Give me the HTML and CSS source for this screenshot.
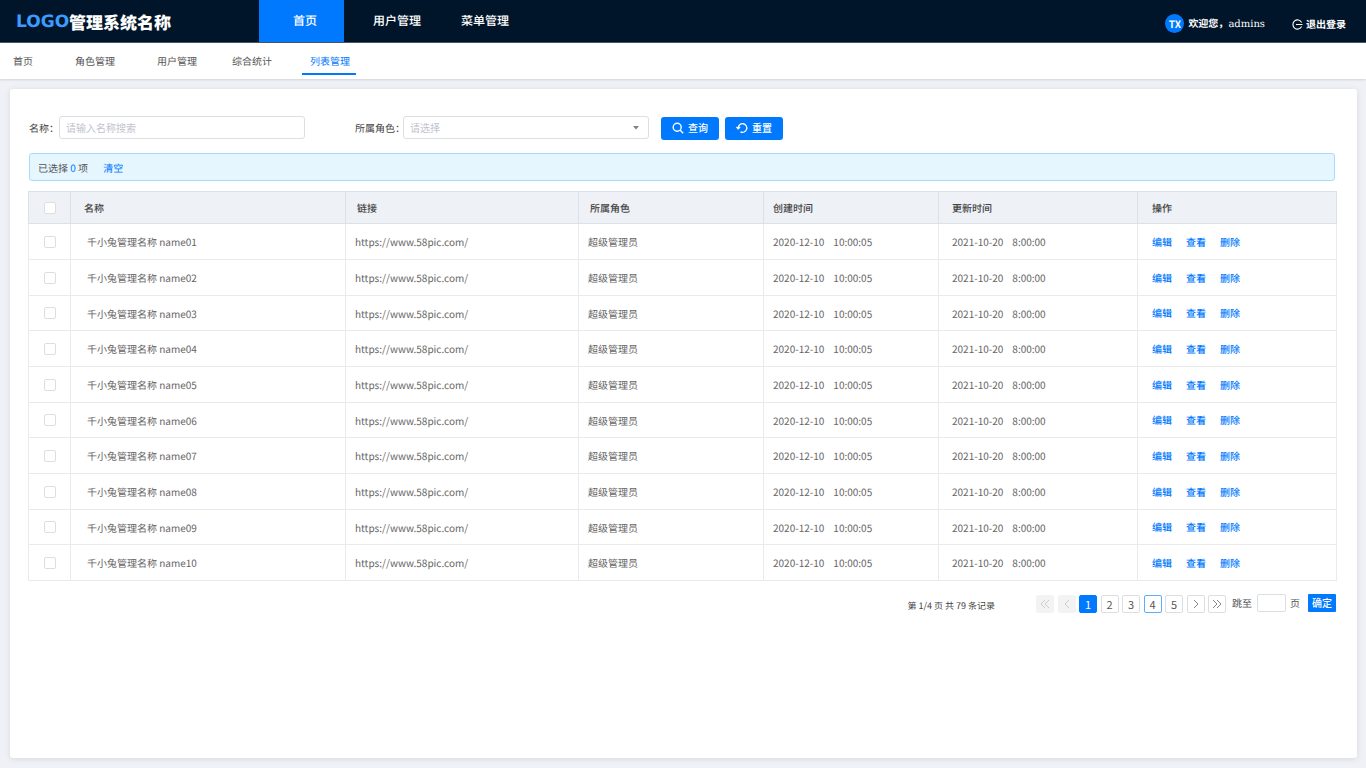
FILE: index.html
```html
<!DOCTYPE html>
<html lang="zh-CN">
<head>
    <meta charset="UTF-8">
    <meta name="viewport" content="width=device-width, initial-scale=1.0">
    <title>管理系统</title>
    <link rel="stylesheet" href="styles.css">
</head>
<body>

<header class="header">
    <a class="logo" href="#"><span>LOGO</span><b>管理系统名称</b></a>
    <nav class="main-nav">
        <a class="active" href="#">首页</a>
        <a href="#">用户管理</a>
        <a href="#">菜单管理</a>
    </nav>
    <div class="user">
        <span class="avatar">TX</span>
        <span class="welcome">欢迎您，<span>admins</span></span>
        <a class="logout" href="#">
            <svg width="11" height="11" viewBox="0 0 11 11" fill="none" stroke="#fff" stroke-width="1.1">
                <path d="M9.6 3.4A4.6 4.6 0 1 0 9.6 7.6M4 5.5h6.5"/>
            </svg>退出登录</a>
    </div>
</header>

<nav class="sub-nav">
    <a href="#">首页</a>
    <a href="#">角色管理</a>
    <a href="#">用户管理</a>
    <a href="#">综合统计</a>
    <a class="active" href="#">列表管理</a>
</nav>

<main class="panel">
    <form class="search" id="search-form">
        <label class="name-label" for="name">名称：</label>
        <input type="text" id="name" placeholder="请输入名称搜索">
        <label class="role-label" for="role">所属角色：</label>
        <select id="role">
            <option value="">请选择</option>
            <option value="1">超级管理员</option>
        </select>
        <button type="submit" class="btn">
            <svg width="12" height="12" viewBox="0 0 12 12" fill="none" stroke="#fff" stroke-width="1.4">
                <circle cx="5.2" cy="5.2" r="4"/><path d="M8 8l3.2 3.2"/>
            </svg>查询</button>
        <button type="reset" class="btn">
            <svg width="12" height="12" viewBox="0 0 12 12" fill="none" stroke="#fff" stroke-width="1.3">
                <path d="M2.2 6.6V6a4.3 4.3 0 1 1 2.3 3.8M.5 5l1.7 1.8L4.1 5"/>
            </svg>重置</button>
    </form>

    <div class="selected">已选择 <em>0</em> 项 <a href="#">清空</a></div>

    <table class="list">
        <colgroup>
            <col class="c-check"><col class="c-name"><col class="c-link"><col class="c-role">
            <col class="c-created"><col class="c-updated"><col class="c-action">
        </colgroup>
        <thead>
            <tr>
                <th><input type="checkbox" aria-label="全选"></th>
                <th>名称</th>
                <th>链接</th>
                <th>所属角色</th>
                <th>创建时间</th>
                <th>更新时间</th>
                <th>操作</th>
            </tr>
        </thead>
        <tbody id="list-body"></tbody>
    </table>

    <div class="footer">
        <span class="total">第 1/4 页 共 79 条记录</span>
        <div class="pages">
            <button disabled aria-label="首页"><svg width="10" height="10" viewBox="0 0 10 10"><path d="M5 1L1 5l4 4M9 1L5 5l4 4"/></svg></button>
            <button disabled aria-label="上一页"><svg width="10" height="10" viewBox="0 0 10 10"><path d="M7 1L3 5l4 4"/></svg></button>
            <button class="current">1</button>
            <button>2</button>
            <button>3</button>
            <button class="hover">4</button>
            <button>5</button>
            <button aria-label="下一页"><svg width="10" height="10" viewBox="0 0 10 10"><path d="M3 1l4 4-4 4"/></svg></button>
            <button aria-label="末页"><svg width="10" height="10" viewBox="0 0 10 10"><path d="M1 1l4 4-4 4M5 1l4 4-4 4"/></svg></button>
        </div>
        <form class="jump">
            <label for="page">跳至</label>
            <input type="text" id="page">
            <span>页</span>
            <button type="submit">确定</button>
        </form>
    </div>
</main>

<script>
// 渲染列表
function renderList() {
    const body = document.getElementById('list-body');
    let html = '';
    for (let i = 1; i <= 10; i++) {
        const no = String(i).padStart(2, '0');
        html += `<tr>
            <td><input type="checkbox" aria-label="选择 name${no}"></td>
            <td>千小兔管理名称 name${no}</td>
            <td>https://www.58pic.com/</td>
            <td>超级管理员</td>
            <td><span class="date">2020-12-10</span>10:00:05</td>
            <td><span class="date">2021-10-20</span>8:00:00</td>
            <td><a href="#">编辑</a><a href="#">查看</a><a href="#">删除</a></td>
        </tr>`;
    }
    body.innerHTML = html;
}

renderList();
</script>

</body>
</html>
```

FILE: styles.css
```css
* {
    box-sizing: border-box;
}

body {
    margin: 0;
    min-height: 100vh;
    display: flex;
    flex-direction: column;
    background: #eff1f6;
    color: #555;
    font-family: "Noto Sans CJK SC", sans-serif;
    font-size: 10px;
    line-height: 16px;
    text-rendering: geometricPrecision;
}

a {
    color: #0079fe;
    text-decoration: none;
}

input, select, button {
    font: inherit;
    margin: 0;
}

/* 顶部 */
.header {
    display: flex;
    height: 43px;
    background: #001529;
    border-bottom: 1px solid #4a5568;
}

.logo {
    width: 259px;
    padding-left: 16px;
    display: flex;
    align-items: center;
    color: #fff;
    font-size: 17px;
    line-height: 24px;
    padding-top: 2px;
}

.logo span {
    color: #3d9bff;
    font-family: "DejaVu Sans", sans-serif;
    font-weight: bold;
}

.logo b {
    font-weight: 900;
}

.main-nav {
    display: flex;
}

.main-nav a {
    padding: 0 20px;
    color: #fff;
    font-size: 12px;
    font-weight: 500;
    line-height: 42px;
}

.main-nav .active {
    width: 85px;
    height: 42px;
    margin-right: 9px;
    padding: 0 0 0 34px;
    background: #0079fe;
}

.user {
    margin-left: auto;
    padding: 5px 20px 0 0;
    display: flex;
    align-items: center;
    color: #fff;
    font-weight: bold;
}

.avatar {
    width: 19px;
    height: 19px;
    margin-right: 4px;
    border-radius: 50%;
    background: #0079fe;
    line-height: 19px;
    text-align: center;
}

.welcome, .logout {
    padding-top: 1px;
}

.welcome span {
    font-family: "DejaVu Serif", serif;
    font-weight: normal;
}

.logout {
    display: flex;
    align-items: center;
    gap: 3px;
    margin-left: 27px;
    color: #fff;
}

/* 二级导航 */
.sub-nav {
    display: grid;
    grid-template-columns: 62px 82px 75px 78px auto;
    justify-content: start;
    height: 36px;
    padding-left: 5px;
    background: #fff;
    box-shadow: 0 1px 2px rgba(0, 0, 0, 0.12);
}

.sub-nav a {
    height: 32px;
    padding: 10px 6px 0 8px;
    color: #555;
}

.sub-nav .active {
    color: #0079fe;
    border-bottom: 2px solid #0079fe;
}

/* 内容 */
.panel {
    flex: 1;
    margin: 10px 9px 10px 10px;
    padding: 27px 21px 20px 18px;
    background: #fff;
    border-radius: 3px;
    box-shadow: 0 1px 6px rgba(0, 0, 0, 0.1);
}

.search {
    display: flex;
    align-items: center;
    padding-left: 1px;
    height: 23px;
}

.search label {
    color: #444;
    white-space: nowrap;
}

.name-label {
    width: 30px;
}

.role-label {
    width: 48px;
    margin-left: 50px;
}

.search input, .search select {
    width: 246px;
    height: 23px;
    padding: 0 6px;
    border: 1px solid #dcdee2;
    border-radius: 3px;
    background: #fff;
    outline: none;
}

.search input::placeholder {
    color: #c0c4cc;
}

.search select {
    appearance: none;
    color: #c0c4cc;
    background: #fff url("data:image/svg+xml,%3Csvg xmlns='http://www.w3.org/2000/svg' width='6' height='4'%3E%3Cpath d='M0 0h6L3 3.5z' fill='%23808080'/%3E%3C/svg%3E") no-repeat right 9px center;
}

.btn {
    display: flex;
    align-items: center;
    justify-content: center;
    gap: 4px;
    width: 58px;
    height: 23px;
    margin: 1px 0 0 6px;
    padding: 0;
    border: none;
    border-radius: 3px;
    background: #0079fe;
    color: #fff;
    font-weight: 500;
    cursor: pointer;
}

select + .btn {
    margin-left: 12px;
}

.selected {
    margin: 14px 1px 10px;
    padding: 6px 8px 4px;
    border: 1px solid #a6dcfb;
    border-radius: 3px;
    background: #e6f6ff;
}

.selected em {
    color: #0079fe;
    font-style: normal;
}

.selected a {
    margin-left: 13px;
}

/* 列表 */
.list {
    width: 100%;
    table-layout: fixed;
    border-collapse: collapse;
}

.c-check { width: 42px; }
.c-name { width: 275px; }
.c-link { width: 233px; }
.c-role { width: 185px; }
.c-created { width: 175px; }
.c-updated { width: 199px; }
.c-action { width: 199px; }

.list th, .list td {
    padding: 1px 0 0 9px;
    border: 1px solid #e8eaec;
    text-align: left;
    font-weight: normal;
}

.list th {
    height: 32px;
    padding-top: 0;
    background: #eef1f6;
    border-color: #dce1e6;
    color: #444;
    font-weight: 500;
}

.list td {
    height: 36px;
    color: #666;
}

.list tr:nth-child(3n) td {
    height: 35px;
}

.list th:nth-child(2) { padding-left: 13px; }
.list td:nth-child(2) { padding-left: 16px; }
.list th:nth-child(3), .list th:nth-child(4) { padding-left: 11px; }
.list th:nth-child(6), .list td:nth-child(6) { padding-left: 13px; }

.list th:last-child, .list td:last-child {
    padding: 0 0 0 14px;
}

.list th:first-child, .list td:first-child {
    padding: 0;
    text-align: center;
}

.list td a {
    margin-right: 14px;
    font-weight: 500;
}

.date {
    margin-right: 9px;
}

input[type="checkbox"] {
    appearance: none;
    display: block;
    width: 12px;
    height: 12px;
    margin: 0 auto;
    border: 1px solid #dcdee2;
    border-radius: 2px;
    background: #fff;
}

/* 分页 */
.footer {
    display: flex;
    justify-content: flex-end;
    align-items: center;
    margin-top: 13px;
}

.total {
    margin-right: 41px;
    padding-top: 3px;
    font-size: 9px;
    color: #444;
}

.pages {
    display: flex;
    justify-content: space-between;
    width: 190px;
    margin-right: 6px;
}

.pages button {
    width: 18px;
    height: 18px;
    padding: 0;
    display: flex;
    align-items: center;
    justify-content: center;
    border: 1px solid #dcdee2;
    border-radius: 2px;
    background: #fff;
    color: #555;
    font-size: 11px;
}

.pages svg {
    fill: none;
    stroke: #888;
}

.pages button:disabled {
    border-color: #f3f3f3;
    background: #f3f3f3;
}

.pages button:disabled svg {
    stroke: #ccc;
}

.pages .current {
    border-color: #0079fe;
    background: #0079fe;
    color: #fff;
}

.pages .hover {
    border-color: #5aaeff;
}

.jump {
    display: flex;
    align-items: center;
    padding-bottom: 2px;
}

.jump input {
    width: 29px;
    height: 18px;
    margin: 0 4px 0 5px;
    border: 1px solid #dcdee2;
    border-radius: 2px;
}

.jump button {
    width: 28px;
    height: 18px;
    margin-left: 8px;
    padding: 0;
    border: none;
    border-radius: 1px;
    background: #0079fe;
    color: #fff;
    font-weight: 500;
}
```
